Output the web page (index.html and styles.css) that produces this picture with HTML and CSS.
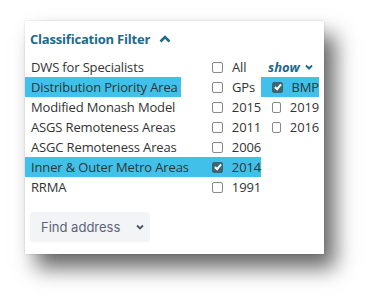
FILE: index.html
```html
<!DOCTYPE html>
<html lang="en">
<head>
  <meta charset="UTF-8">
  <title>Classification Filter</title>
  <link rel="stylesheet" href="styles.css">
</head>
<body>
  <div class="card">
    <div class="title">Classification Filter
      <svg class="caret" width="12" height="8" viewBox="0 0 12 8"><path d="M1.5 6.5 L6 2 L10.5 6.5" fill="none" stroke="#1d6a8a" stroke-width="2.6"/></svg>
    </div>

    <div class="rows">
      <div class="row">
        <div class="left"><div class="name"><span>DWS for Specialists</span></div><div class="c1"><i class="box"></i>All</div></div>
        <div class="c2 show">show <svg width="8" height="6" viewBox="0 0 8 6"><path d="M1 1.5 L4 4.5 L7 1.5" fill="none" stroke="#1d6a8a" stroke-width="2"/></svg></div>
      </div>
      <div class="row">
        <div class="left"><div class="name"><span class="hl">Distribution Priority Area</span></div><div class="c1"><i class="box"></i>GPs</div></div>
        <div class="c2 hl"><i class="box on"></i>BMP</div>
      </div>
      <div class="row">
        <div class="left"><div class="name"><span>Modified Monash Model</span></div><div class="c1"><i class="box"></i>2015</div></div>
        <div class="c2"><i class="box"></i>2019</div>
      </div>
      <div class="row">
        <div class="left"><div class="name"><span>ASGS Remoteness Areas</span></div><div class="c1"><i class="box"></i>2011</div></div>
        <div class="c2"><i class="box"></i>2016</div>
      </div>
      <div class="row">
        <div class="left"><div class="name"><span>ASGC Remoteness Areas</span></div><div class="c1"><i class="box"></i>2006</div></div>
        <div class="c2"></div>
      </div>
      <div class="row">
        <div class="left hl"><div class="name"><span>Inner &amp; Outer Metro Areas</span></div><div class="c1"><i class="box on"></i>2014</div></div>
        <div class="c2"></div>
      </div>
      <div class="row">
        <div class="left"><div class="name"><span>RRMA</span></div><div class="c1"><i class="box"></i>1991</div></div>
        <div class="c2"></div>
      </div>
    </div>

    <button class="find">Find address
      <svg width="8" height="6" viewBox="0 0 8 6"><path d="M1 1.5 L4 4.5 L7 1.5" fill="none" stroke="#4b5563" stroke-width="1.8"/></svg>
    </button>
  </div>
</body>
</html>
```

FILE: styles.css
```css
html, body { height: 296px; }
body { margin: 0; padding-top: 21px; box-sizing: border-box; background: #fff; font-family: "Open Sans", "Noto Sans", sans-serif; color: #333; }
.card { width: 299px; height: 233px; margin-left: 25px; background: #fff; box-sizing: border-box; padding-top: 9px; box-shadow: 11px 14px 20px rgba(0,0,0,0.6), 0 0 2px rgba(0,0,0,0.15); }
.title { height: 18px; line-height: 18px; padding-left: 5px; font-size: 13px; font-weight: 700; letter-spacing: -0.2px; color: #1d6a8a; display: flex; align-items: center; }
.caret { margin-left: 9px; }
.rows { margin-top: 9px; font-size: 13px; letter-spacing: -0.15px; }
.row { display: flex; height: 20px; }
.left { display: flex; width: 236px; }
.name { width: 180px; display: flex; align-items: center; }
.name span { padding: 0 3px 0 6px; line-height: 20px; }
.c1, .c2 { display: flex; align-items: center; line-height: 20px; }
.c1 { width: 56px; padding-left: 7px; box-sizing: border-box; }
.c2 { width: 58px; padding-left: 11px; box-sizing: border-box; }
.hl { background: #41c1ea; }
.box { display: inline-block; width: 9px; height: 9px; border: 1px solid #888; border-radius: 2px; margin-right: 9px; background: #fff; position: relative; }
.box.on { background: #3f6570; border-color: #3f6570; }
.box.on::after { content: ""; position: absolute; left: 3px; top: 0px; width: 2px; height: 5px; border: solid #fff; border-width: 0 2px 2px 0; transform: rotate(40deg); }
.show { font-style: italic; font-weight: 700; color: #1d6a8a; padding-left: 7px; letter-spacing: 0; }
.show svg { margin-left: 5px; }
.find { display: flex; align-items: center; margin: 15px 0 0 5px; width: 120px; height: 30px; border: none; border-radius: 3px; background: #f3f4f6; font-family: Inter, sans-serif; font-size: 13px; color: #5b6478; padding: 0 0 0 11px; }
.find svg { margin-left: 16px; }
```
